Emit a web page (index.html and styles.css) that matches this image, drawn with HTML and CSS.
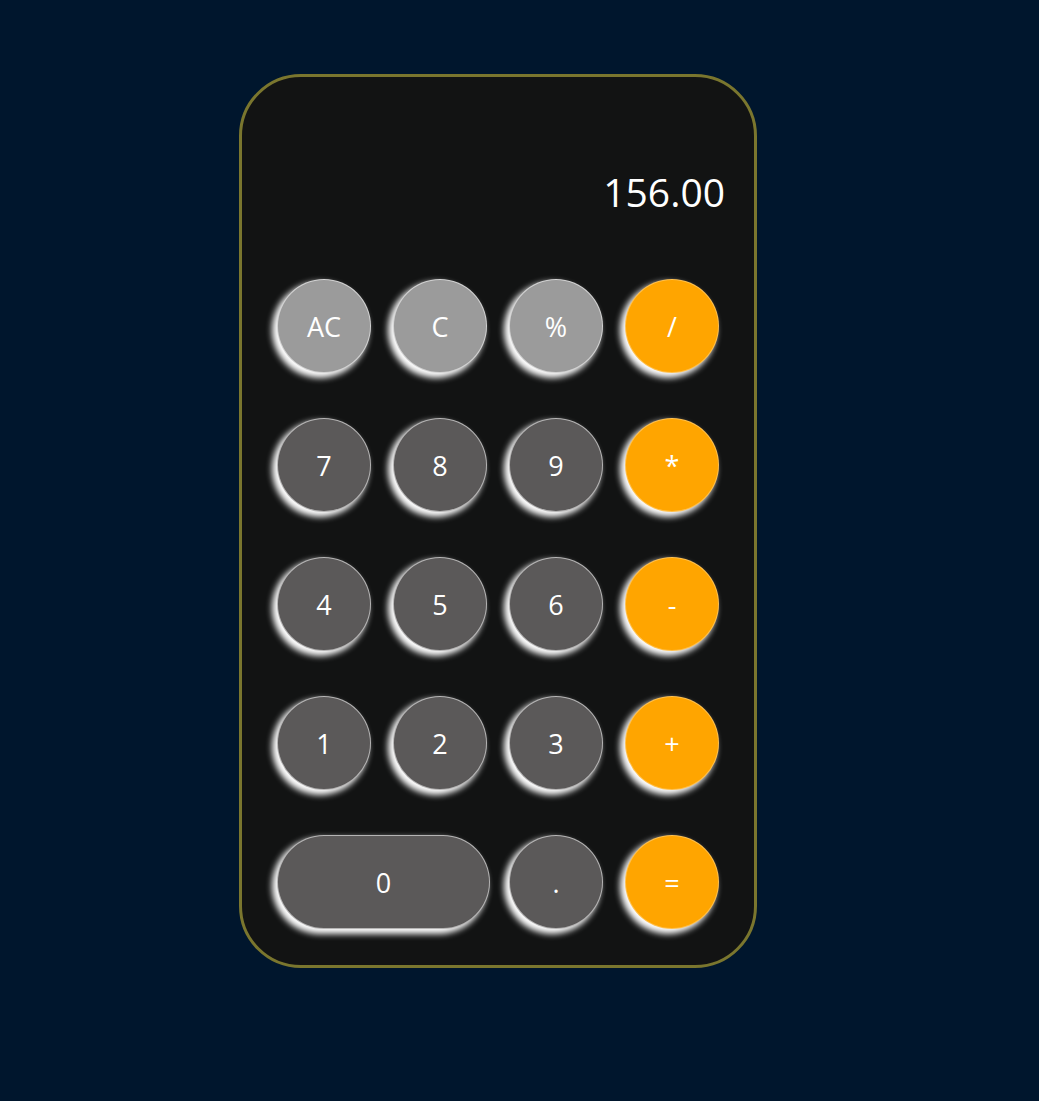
FILE: index.html
```html
<!DOCTYPE html>
<html lang="en">
<head>
<meta charset="utf-8">
<title>Calculator</title>
<link rel="stylesheet" href="styles.css">
</head>
<body>
<div class="page">
  <div class="calc">
    <div class="display">156.00</div>
    <div class="keys">
      <button class="key light">AC</button>
      <button class="key light">C</button>
      <button class="key light">%</button>
      <button class="key op">/</button>
      <button class="key">7</button>
      <button class="key">8</button>
      <button class="key">9</button>
      <button class="key op">*</button>
      <button class="key">4</button>
      <button class="key">5</button>
      <button class="key">6</button>
      <button class="key op">-</button>
      <button class="key">1</button>
      <button class="key">2</button>
      <button class="key">3</button>
      <button class="key op">+</button>
      <button class="key wide">0</button>
      <button class="key">.</button>
      <button class="key op">=</button>
    </div>
  </div>
</div>
</body>
</html>
```
FILE: styles.css
```css
html, body {
  margin: 0;
  padding: 0;
  background: #00162d;
  height: 100%;
}
body {
  font-family: "Open Sans", "Noto Sans", sans-serif;
}
.page {
  padding-top: 74px;
  padding-left: 239px;
}
.calc {
  box-sizing: border-box;
  width: 518px;
  height: 894px;
  background: #121313;
  border: 3px solid #7a762e;
  border-radius: 62px;
  padding: 0 35px;
}
.display {
  margin-top: 91px;
  margin-right: -6px;
  text-align: right;
  color: #fff;
  font-size: 39px;
  line-height: 48px;
  height: 48px;
}
.keys {
  margin-top: 63px;
  display: grid;
  grid-template-columns: repeat(4, 94px);
  grid-auto-rows: 94px;
  justify-content: space-between;
  row-gap: 45px;
}
.key {
  box-sizing: border-box;
  width: 94px;
  height: 94px;
  border-radius: 47px;
  border: 1px solid rgba(255, 255, 255, 0.55);
  background: #5b5959;
  color: #fff;
  font-family: "Open Sans", "Noto Sans", sans-serif;
  font-size: 27px;
  padding: 0;
  box-shadow: -4px 4px 6px 1px #ffffff;
  cursor: pointer;
}
.key.light {
  background: #9b9b9b;
}
.key.op {
  background: #ffa500;
  border-color: rgba(255, 255, 255, 0.3);
}
.key.wide {
  grid-column: span 2;
  width: 213px;
}
```
